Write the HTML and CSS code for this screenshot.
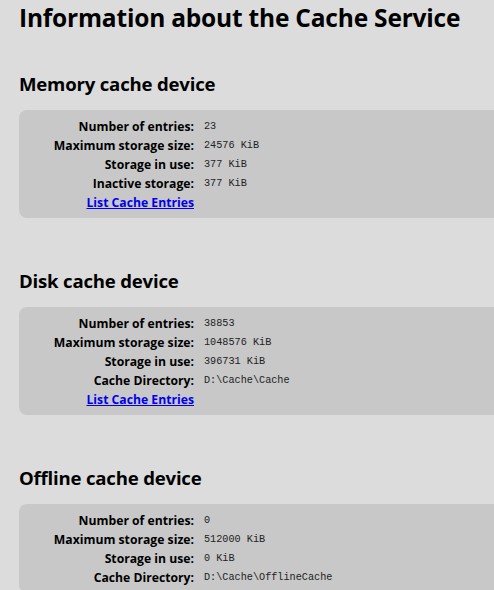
FILE: index.html
```html
<!DOCTYPE html>
<html>
<head>
<meta charset="utf-8">
<title>Information about the Cache Service</title>
<link rel="stylesheet" href="styles.css">
</head>
<body>
<h1 class="title">Information about the Cache Service</h1>

<h2 class="device-title">Memory cache device</h2>
<div class="device-box">
  <div class="row"><span class="label">Number of entries:</span><span class="value">23</span></div>
  <div class="row"><span class="label">Maximum storage size:</span><span class="value">24576 KiB</span></div>
  <div class="row"><span class="label">Storage in use:</span><span class="value">377 KiB</span></div>
  <div class="row"><span class="label">Inactive storage:</span><span class="value">377 KiB</span></div>
  <div class="row"><span class="label"><a href="#" class="entries-link">List Cache Entries</a></span><span class="value"></span></div>
</div>

<h2 class="device-title">Disk cache device</h2>
<div class="device-box">
  <div class="row"><span class="label">Number of entries:</span><span class="value">38853</span></div>
  <div class="row"><span class="label">Maximum storage size:</span><span class="value">1048576 KiB</span></div>
  <div class="row"><span class="label">Storage in use:</span><span class="value">396731 KiB</span></div>
  <div class="row"><span class="label">Cache Directory:</span><span class="value">D:\Cache\Cache</span></div>
  <div class="row"><span class="label"><a href="#" class="entries-link">List Cache Entries</a></span><span class="value"></span></div>
</div>

<h2 class="device-title">Offline cache device</h2>
<div class="device-box">
  <div class="row"><span class="label">Number of entries:</span><span class="value">0</span></div>
  <div class="row"><span class="label">Maximum storage size:</span><span class="value">512000 KiB</span></div>
  <div class="row"><span class="label">Storage in use:</span><span class="value">0 KiB</span></div>
  <div class="row"><span class="label">Cache Directory:</span><span class="value">D:\Cache\OfflineCache</span></div>
</div>
</body>
</html>
```

FILE: styles.css
```css
html, body {
  margin: 0;
  padding: 0;
  background: #dcdcdc;
  overflow: hidden;
}
body {
  padding-left: 19px;
  font-family: "Open Sans", "Noto Sans", sans-serif;
  color: #000;
}
.title {
  margin: 0;
  padding-top: 1px;
  font-size: 24.5px;
  font-weight: 700;
  line-height: 34px;
  letter-spacing: -0.2px;
}
.device-title {
  margin: 36px 0 0 0;
  font-size: 18.6px;
  font-weight: 700;
  line-height: 26px;
  letter-spacing: -0.2px;
}
.device-box {
  margin: 13px -40px 0 0;
  padding: 7px 0 6px 0;
  background: #c8c8c8;
  border-radius: 8px;
  display: grid;
  grid-template-columns: 175px 1fr;
  column-gap: 10px;
}
.device-box + .device-title {
  margin-top: 50px;
}
.row {
  display: contents;
}
.label {
  text-align: right;
  font-size: 12.2px;
  font-weight: 700;
  line-height: 19px;
  white-space: nowrap;
}
.value {
  font-family: "Liberation Mono", monospace;
  font-size: 10.2px;
  line-height: 19px;
  color: #222;
  white-space: nowrap;
}
.entries-link {
  color: #0000ee;
  text-decoration: underline;
}
```
